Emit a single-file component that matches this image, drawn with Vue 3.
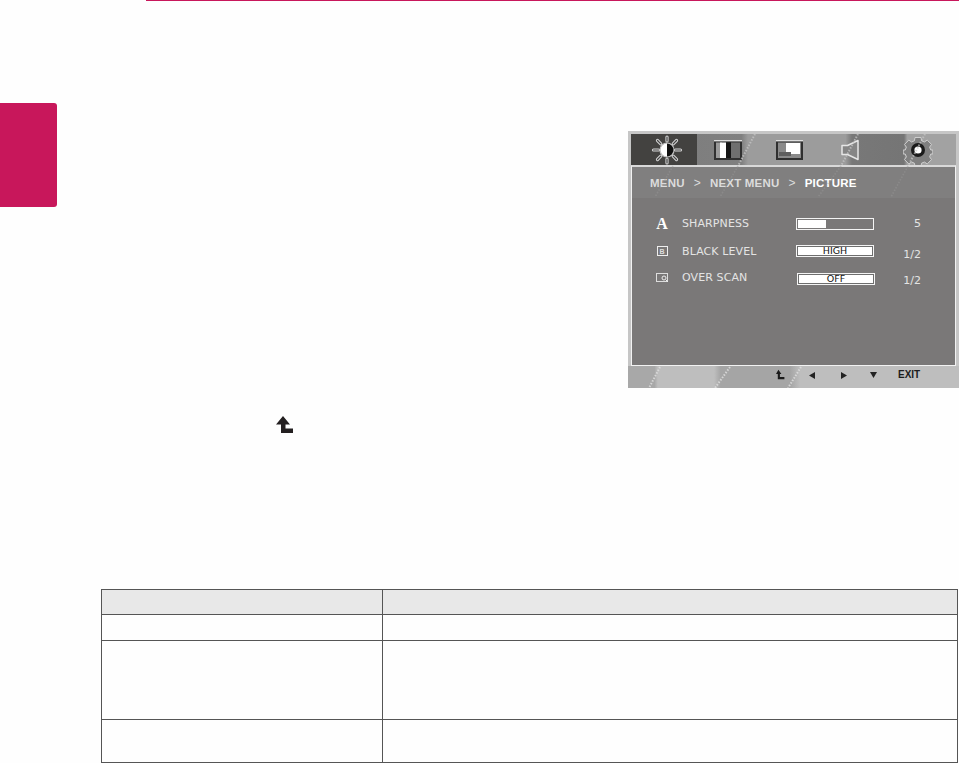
<template>
  <div class="page">
    <div class="rule"></div>
    <div class="sheet">
      <div class="side-tab"></div>
      <div class="content">
        <div class="osd">
          <div class="tabs">
            <div v-for="tab in tabs" :key="tab.id" class="tab" :class="[tab.id, { active: tab.active }]">
              <svg v-if="tab.id === 'sun'" width="34" height="30" viewBox="0 0 34 30">
                <path d="M17 2v4M17 24v4M3.500 15h5M25.500 15h5M7.500 5.500l3.300 3.300M26.500 5.500l-3.300 3.300M7.500 24.500l3.300-3.300M26.500 24.500l-3.300-3.300" stroke="#d6d6d6" stroke-width="3.200" stroke-linecap="round" fill="none" />
                <path d="M17 2v4M17 24v4M3.500 15h5M25.500 15h5M7.500 5.500l3.300 3.300M26.500 5.500l-3.300 3.300M7.500 24.500l3.300-3.300M26.500 24.500l-3.300-3.300" stroke="#444" stroke-width="1.200" stroke-linecap="round" fill="none" />
                <circle cx="17" cy="15" r="7" fill="#fff" stroke="#c4c4c4" stroke-width="1.200" />
                <path d="M17 8.500a6.500 6.500 0 0 1 0 13z" fill="#111" />
              </svg>
              <svg v-else-if="tab.id === 'bars'" width="28" height="20" viewBox="0 0 28 20">
                <rect x="0" y="0" width="28" height="20" fill="#303030" />
                <rect x="0" y="0" width="28" height="1.400" fill="#dedede" />
                <rect x="2" y="2.500" width="6" height="15.500" fill="#9a9a9a" />
                <rect x="6" y="2.500" width="6" height="15.500" fill="#fff" />
                <rect x="12" y="2.500" width="5" height="15.500" fill="#161616" />
                <rect x="17" y="2.500" width="9" height="15.500" fill="#6f6f6f" />
              </svg>
              <svg v-else-if="tab.id === 'pic'" width="27" height="20" viewBox="0 0 27 20">
                <rect x="0" y="0" width="27" height="20" fill="#303030" />
                <rect x="0" y="0" width="27" height="1.400" fill="#dedede" />
                <rect x="2" y="2.500" width="23" height="15.500" fill="#8a8a8a" />
                <rect x="10" y="3" width="14" height="11" fill="#fff" />
                <rect x="3" y="12" width="12" height="4" fill="#5f5f5f" />
              </svg>
              <svg v-else-if="tab.id === 'spk'" width="20" height="24" viewBox="0 0 20 24">
                <path d="M2 7.500h5.500L18 2.500v19L7.500 16.500H2z" fill="#868686" stroke="#e6e6e6" stroke-width="1.500" stroke-linejoin="round" />
              </svg>
              <svg v-else width="30" height="30" viewBox="0 0 30 30">
                <path d="M12 2.500h6l.6 3.300 2.800 1.200 2.800-1.900 4.300 4.300-1.900 2.800 1.200 2.800h2v4h-2l-1.200 2.800 1.900 2.800-4.300 4.300-2.800-1.900-2.800 1.200-.6 3.300h-6l-.6-3.300-2.800-1.200-2.800 1.900-4.300-4.300 1.900-2.800-1.200-2.800h-2v-4h2l1.200-2.800-1.900-2.800 4.300-4.300 2.800 1.900 2.800-1.200z" fill="#808080" stroke="#cfcfcf" stroke-width="1" />
                <circle cx="15" cy="15" r="7" fill="#1b1b1b" />
                <circle cx="15" cy="15" r="3.600" fill="#fff" />
              </svg>
            </div>
          </div>
          <div class="panel">
            <div class="crumbs">
              <span>MENU</span><span class="sep">&gt;</span><span>NEXT MENU</span><span class="sep">&gt;</span><span class="now">PICTURE</span>
            </div>
            <div class="rows">
              <div class="row first">
                <span class="glyph-a">A</span>
                <span class="label rise">SHARPNESS</span>
                <span class="meter"><span class="fill" :style="{ width: sharp + '%' }"></span></span>
                <span class="val rise">5</span>
              </div>
              <div class="row second">
                <span class="glyph-b"><i>B</i></span>
                <span class="label">BLACK LEVEL</span>
                <span class="meter solid">HIGH</span>
                <span class="val low">1/2</span>
              </div>
              <div class="row third">
                <svg class="glyph-o" width="13" height="11" viewBox="0 0 13 11">
                  <rect x=".5" y="1.500" width="11" height="8" fill="none" stroke="#ddd" />
                  <circle cx="8" cy="6" r="2" fill="none" stroke="#eee" />
                  <path d="M10 8l2 2" stroke="#eee" />
                </svg>
                <span class="label lift">OVER SCAN</span>
                <span class="meter solid nudge">OFF</span>
                <span class="val drop">1/2</span>
              </div>
            </div>
          </div>
          <div class="foot">
            <svg class="f-enter" width="9" height="11" viewBox="0 0 15 16"><path d="M4 0 9 7H6.500v5H14v4H3V7H0z" fill="#1a1a1a" /></svg>
            <svg class="f-left" width="6" height="7" viewBox="0 0 6 7"><path d="M6 0v7L0 3.500z" fill="#222" /></svg>
            <svg class="f-right" width="6" height="7" viewBox="0 0 6 7"><path d="M0 0v7l6-3.500z" fill="#222" /></svg>
            <svg class="f-down" width="7" height="6" viewBox="0 0 7 6"><path d="M0 0h7L3.500 6z" fill="#222" /></svg>
            <span class="exit">EXIT</span>
          </div>
          <svg class="streaks" width="331" height="257" viewBox="0 0 331 257">
            <g fill="none" stroke="#c9c9c9" stroke-width="2" stroke-dasharray="1.500 1.500" opacity=".7">
              <path d="M127 3 110 35M230 3 213 35M297 3 280 35" />
            </g>
            <g fill="none" stroke="#9a9a9a" stroke-width="1.600" stroke-dasharray="1.500 1.500" opacity=".45">
              <path d="M45 35 27 66M110 35 92 66M213 35 190 66M280 35 263 66" />
            </g>
            <g fill="none" stroke="#e0e0e0" stroke-width="2" stroke-dasharray="1.500 1.500" opacity=".8">
              <path d="M32 236 21 257M102 236 87 257M173 236 160 257" />
            </g>
          </svg>
        </div>
        <svg class="enter-mark" width="17" height="17" viewBox="0 0 17 17"><path d="M7 0 14 8.500H9.500V12.500H17V17H5V8.500H0z" fill="#231f20" /></svg>
        <table class="spec">
          <tbody>
            <tr class="head"><td class="c1"></td><td></td></tr>
            <tr class="r1"><td></td><td></td></tr>
            <tr class="r2"><td></td><td></td></tr>
            <tr class="r3"><td></td><td></td></tr>
          </tbody>
        </table>
      </div>
    </div>
  </div>
</template>

<script setup>
const sharp = 38
const tabs = [
  { id: 'sun', active: true },
  { id: 'bars' },
  { id: 'pic' },
  { id: 'spk' },
  { id: 'gear' }
]
</script>

<style>
html, body { margin: 0; background: #fff; }
</style>

<style scoped>
.page {
  width: 959px;
  height: 763px;
  overflow: hidden;
  background: #fefefe;
  font-family: "DejaVu Sans", sans-serif;
}
.rule {
  height: 1px;
  margin-left: 146px;
  background: #c8175b;
}
.sheet {
  display: flex;
  align-items: flex-start;
}
.side-tab {
  flex: none;
  width: 57px;
  height: 104px;
  margin-top: 102px;
  background: #c8175b;
  border-radius: 0 3px 3px 0;
}
.content {
  flex: 1;
  padding-top: 130px;
}
.osd {
  position: relative;
  width: 331px;
  height: 257px;
  margin-left: 571px;
  box-sizing: border-box;
  padding: 3px 3px 0;
  background: #c6c6c6;
  display: flex;
  flex-direction: column;
}
.tabs {
  display: flex;
  height: 31px;
  flex: none;
  background: linear-gradient(90deg, #7c7c7c 0, #808080 34%, #9c9c9c 36%, #9c9c9c 66%, #787878 68%, #757575 84%, #a2a2a2 85%, #a2a2a2 100%);
}
.tab {
  display: flex;
  align-items: center;
  justify-content: center;
}
.tab.sun { width: 66px; padding-left: 6px; box-sizing: border-box; }
.tab.bars { width: 62px; }
.tab.pic { width: 60px; }
.tab.spk { width: 61px; }
.tab.gear { flex: 1; }
.tab.active { background: #434240; }
.panel {
  flex: 1;
  border: 1px solid #f2f2f2;
  border-top: 2px solid #d9d9d9;
  background: #7a7878;
  display: flex;
  flex-direction: column;
}
.crumbs {
  height: 31px;
  display: flex;
  align-items: center;
  padding-left: 18px;
  gap: 9px;
  background: #807f7f;
  color: #dcdcdc;
  font: bold 11.500px "Liberation Sans", sans-serif;
  letter-spacing: .2px;
}
.crumbs .sep { font-weight: normal; font-size: 12px; }
.crumbs .now { color: #fff; }
.rows {
  display: flex;
  flex-direction: column;
  padding-top: 17px;
}
.row {
  display: grid;
  grid-template-columns: 40px 114px 78px 1fr;
  align-items: center;
  padding-left: 10px;
  color: #e4e4e4;
  font-size: 11px;
  height: 14px;
}
.row.first { margin-bottom: 15px; }
.row.second { margin-bottom: 14px; }
.glyph-a {
  justify-self: center;
  font: bold 16px "Liberation Serif", serif;
  color: #fff;
}
.glyph-b {
  justify-self: center;
  box-sizing: border-box;
  width: 11px;
  height: 10px;
  border: 1px solid #eee;
  display: flex;
  align-items: center;
  justify-content: center;
}
.glyph-b i {
  font: bold 7px "Liberation Sans", sans-serif;
  color: #ddd;
}
.glyph-o { justify-self: center; position: relative; top: -2px; }
.label { letter-spacing: .1px; }
.label.lift { position: relative; top: -2px; }
.rise { position: relative; top: -1px; }
.meter {
  box-sizing: border-box;
  height: 12px;
  border: 1px solid #f4f4f4;
  padding: 1px;
  display: block;
}
.fill {
  display: block;
  height: 100%;
  background: #fff;
}
.meter.solid {
  background: #fff;
  border: 2px solid #6e6e6e;
  outline: 1px solid #f4f4f4;
  outline-offset: -1px;
  color: #111;
  font: 9.500px/8px "DejaVu Sans", sans-serif;
  text-align: center;
  padding: 0;
  height: 12px;
}
.meter.nudge { margin-left: 1px; margin-right: -1px; }
.val {
  justify-self: end;
  margin-right: 34px;
  font-size: 11px;
}
.val.low { position: relative; top: 3px; }
.val.drop { position: relative; top: 1px; }
.foot {
  height: 22px;
  flex: none;
  display: flex;
  align-items: center;
  margin: 0 -3px;
  background: linear-gradient(90deg, #a8a8a8 0, #a8a8a8 8%, #bebebe 9%, #bebebe 26%, #a5a5a5 28%, #a5a5a5 49%, #bebebe 52%, #bebebe 100%);
}
.f-enter { margin-left: 148px; margin-bottom: 6px; }
.f-left { margin-left: 24px; margin-bottom: 4px; }
.f-right { margin-left: 26px; margin-bottom: 4px; }
.f-down { margin-left: 23px; margin-bottom: 4px; }
.exit {
  margin-left: 21px;
  margin-bottom: 6px;
  font: bold 10px "Liberation Sans", sans-serif;
  color: #1c1c1c;
}
.streaks {
  position: absolute;
  inset: 0;
  pointer-events: none;
}
.enter-mark {
  display: block;
  margin: 28px 0 0 219px;
}
.spec {
  margin: 156px 0 0 44px;
  width: 857px;
  border-collapse: collapse;
  table-layout: fixed;
}
.spec td {
  border: 1px solid #555;
  padding: 0;
}
.spec .c1 { width: 280px; }
.head td { height: 24px; background: #e8e8e8; }
.r1 td { height: 25px; }
.r2 td { height: 78px; }
.r3 td { height: 42px; }
</style>
